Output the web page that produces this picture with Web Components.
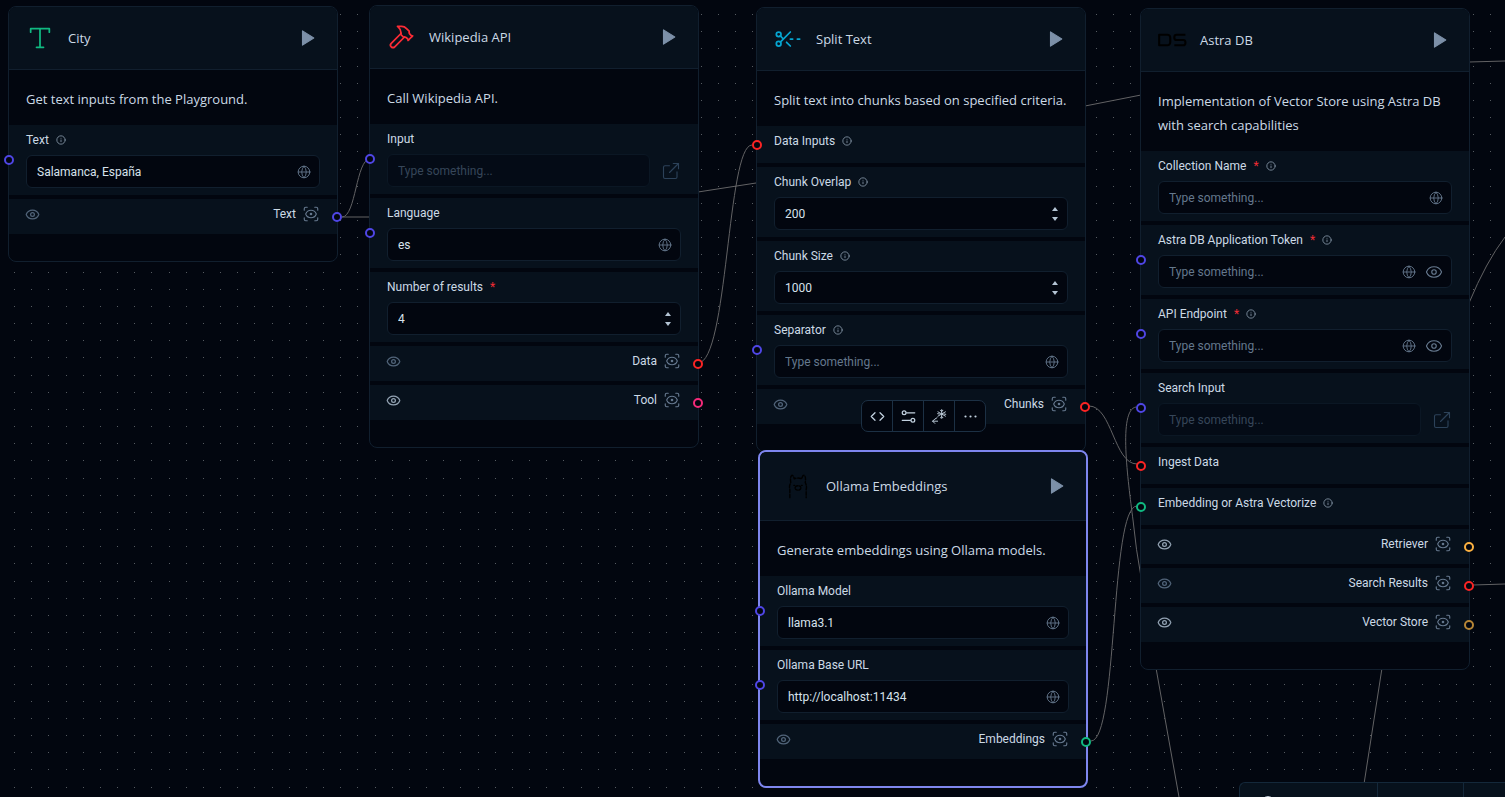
<!DOCTYPE html>
<html lang="en">
<head>
<meta charset="utf-8">
<title>Flow editor</title>
<style>
  html, body { margin: 0; height: 100%; background: #02060f; }
  body {
    font-family: "Open Sans", "Noto Sans", sans-serif;
    color: #ccdae6;
    --card: #07111c;
    --ground: #02060f;
    --line: #111f2e;
    --muted: #677a90;
    --label-font: Roboto, "Liberation Sans", sans-serif;
    --indigo: #4f46e5;
    --red: #fb2424;
    --green: #10b981;
    --pink: #f42a79;
    --amber: #fbb040;
    --ochre: #b78636;
  }
</style>
</head>
<body>
<flow-canvas>
  <flow-node name="City" icon="type" tint="#10b981" text="Get text inputs from the Playground." style="left:8px;top:6px">
    <node-field label="Text" info value="Salamanca, España" kind="global" port="--indigo"></node-field>
    <node-output label="Text" port="--indigo"></node-output>
  </flow-node>

  <flow-node name="Wikipedia API" icon="hammer" tint="#fb2c36" text="Call Wikipedia API." style="left:369px;top:5px">
    <node-field label="Input" kind="linked" port="--indigo"></node-field>
    <node-field label="Language" value="es" kind="global" port="--indigo"></node-field>
    <node-field label="Number of results" required value="4" kind="number"></node-field>
    <node-output label="Data" port="--red"></node-output>
    <node-output label="Tool" port="--pink" bright></node-output>
  </flow-node>

  <flow-node name="Split Text" icon="scissors" tint="#06a5d0" text="Split text into chunks based on specified criteria." style="left:756px;top:7px">
    <node-field label="Data Inputs" info kind="port" port="--red"></node-field>
    <node-field label="Chunk Overlap" info value="200" kind="number"></node-field>
    <node-field label="Chunk Size" info value="1000" kind="number"></node-field>
    <node-field label="Separator" info kind="global" port="--indigo"></node-field>
    <node-output label="Chunks" port="--red"></node-output>
  </flow-node>

  <flow-node name="Ollama Embeddings" icon="llama" tint="#000" text="Generate embeddings using Ollama models." selected style="left:758px;top:450px">
    <node-field label="Ollama Model" value="llama3.1" kind="global" port="--indigo"></node-field>
    <node-field label="Ollama Base URL" value="http://localhost:11434" kind="global" port="--indigo"></node-field>
    <node-output label="Embeddings" port="--green"></node-output>
  </flow-node>

  <flow-node name="Astra DB" icon="datastax" tint="#000" text="Implementation of Vector Store using Astra DB with search capabilities" style="left:1140px;top:8px">
    <node-field label="Collection Name" required info kind="global"></node-field>
    <node-field label="Astra DB Application Token" required info kind="secret" port="--indigo"></node-field>
    <node-field label="API Endpoint" required info kind="secret" port="--indigo"></node-field>
    <node-field label="Search Input" kind="linked" port="--indigo"></node-field>
    <node-field label="Ingest Data" kind="port" port="--red"></node-field>
    <node-field label="Embedding or Astra Vectorize" info kind="port" port="--green"></node-field>
    <node-output label="Retriever" port="--amber" bright></node-output>
    <node-output label="Search Results" port="--red"></node-output>
    <node-output label="Vector Store" port="--ochre" bright></node-output>
  </flow-node>

  <node-toolbar style="left:861px;top:400px"></node-toolbar>
  <flow-dock style="left:1239px;top:782px"></flow-dock>
</flow-canvas>

<script>
const ICONS = {
  type: '<path d="M4 7V4h16v3M9 20h6M12 4v16"/>',
  hammer: '<path d="m15 12-8.373 8.373a1 1 0 1 1-3-3L12 9"/><path d="m18 15 4-4"/><path d="m21.5 11.5-1.914-1.914A2 2 0 0 1 19 8.172V7l-2.26-2.26a6 6 0 0 0-4.202-1.756L9 2.96l.92.82A6.18 6.18 0 0 1 12 8.4V10l2 2h1.172a2 2 0 0 1 1.414.586L18.5 14.5"/>',
  scissors: '<circle cx="4" cy="8" r="2"/><circle cx="4" cy="16" r="2"/><path d="M5.42 9.42 8 12M14 6l-8.58 8.58M10.8 14.8 14 18M16 12h-2M22 12h-2"/>',
  llama: '<g stroke-width="1.2"><path d="M5 22v-7c-.6-2-.2-4 .8-6C5.300 6 5.500 3.500 6.800 2.800c1.200 0 1.700 1.600 1.900 3 2-.8 4.600-.8 6.600 0 .2-1.400.7-3 1.900-3C18.500 3.500 18.700 6 18.200 9c1 2 1.400 4 .8 6v7" stroke-dasharray="3 1.400"/><path d="M8.500 11.500h.6M15 11.500h.6M10 12.500c1-1 3-1 4 0s.5 3-2 3-3-2-2-3" stroke-dasharray="2 1"/></g>',
  datastax: '<path d="M1 7.500h7a2.500 2.500 0 0 1 2.500 2.500v4A2.500 2.500 0 0 1 8 16.500H1zM23.500 7.500H16a2 2 0 0 0-2 2v.500a2 2 0 0 0 2 2h5.500a2 2 0 0 1 2 2v.500a2 2 0 0 1-2 2H14" stroke-width="1.800" stroke-linecap="butt"/>',
  play: '<path d="M6 2.500 21 12 6 21.500z" fill="currentColor"/>',
  globe: '<circle cx="12" cy="12" r="10"/><path d="M12 2a14.500 14.500 0 0 0 0 20 14.500 14.500 0 0 0 0-20M2 12h20"/>',
  info: '<circle cx="12" cy="12" r="10"/><path d="M12 16v-4M12 8h.01"/>',
  eye: '<path d="M2.062 12.348a1 1 0 0 1 0-.696 10.750 10.750 0 0 1 19.876 0 1 1 0 0 1 0 .696 10.750 10.750 0 0 1-19.876 0"/><circle cx="12" cy="12" r="3"/>',
  scan: '<path d="M3 7V5a2 2 0 0 1 2-2h2M17 3h2a2 2 0 0 1 2 2v2M21 17v2a2 2 0 0 1-2 2h-2M7 21H5a2 2 0 0 1-2-2v-2"/><circle cx="12" cy="12" r="1"/><path d="M18.944 12.330a1 1 0 0 0 0-.660 7.500 7.500 0 0 0-13.888 0 1 1 0 0 0 0 .660 7.500 7.500 0 0 0 13.888 0"/>',
  external: '<path d="M15 2h7v7M10 14 22 2M20 13v7a2 2 0 0 1-2 2H4a2 2 0 0 1-2-2V7a2 2 0 0 1 2-2h6"/>',
  up: '<path d="M12 6 21 18H3z" fill="currentColor" stroke="none"/>',
  down: '<path d="M3 6h18l-9 12z" fill="currentColor" stroke="none"/>',
  code: '<path d="m16 18 6-6-6-6M8 6l-6 6 6 6"/>',
  sliders: '<path d="M22 6H9M15 18H2"/><circle cx="19" cy="18" r="3"/><circle cx="5" cy="6" r="3"/>',
  freeze: '<g stroke-width="1.500"><path d="M15.500 1v14M9.500 4.500l12 7M21.500 4.500l-12 7M13.500 2l2 2 2-2M13.500 14l2-2 2 2M9 7.500l3 .5M22 8.500l-3-.5"/><path d="M9 19.500H1M4.500 16 1 19.500 4.500 23M8 14l-3 2"/></g>',
  dots: '<path d="M4 12h.01M12 12h.01M20 12h.01" stroke-width="3.500"/>',
  disc: '<circle cx="12" cy="12" r="11" fill="currentColor"/>'
};

const define = (tag, css, render) => customElements.define(tag, class extends HTMLElement {
  connectedCallback() {
    if (this.shadowRoot) return;
    const root = this.attachShadow({ mode: 'open' });
    const t = document.createElement('template');
    t.innerHTML = `<style>*{box-sizing:border-box}button{all:unset;display:flex;align-items:center;justify-content:center;box-sizing:border-box;cursor:pointer}${css}</style>${render(this)}`;
    root.append(t.content.cloneNode(true));
  }
});
const at = (el, name) => el.getAttribute(name) || '';

define('ui-icon', `
  :host { display: block; flex: none; width: var(--size, 14px); height: var(--size, 14px); }
  svg { display: block; width: 100%; height: 100%; overflow: visible; }`,
  el => `<svg viewBox="0 0 24 24" fill="none" stroke="currentColor" stroke-width="${at(el, 'weight') || '1.5'}" stroke-linecap="round" stroke-linejoin="round" aria-hidden="true">${ICONS[at(el, 'name')]}</svg>`);

// Connection point, centred on the edge of the row that holds it.
define('flow-port', `
  :host { display: block; position: absolute; z-index: 2; top: 50%; left: -5px; margin-top: -5px;
    width: 10px; height: 10px; box-sizing: border-box; border: 2px solid; border-radius: 50%; background: var(--ground); }
  :host([side=right]) { left: auto; right: -5px; }`, () => '');

define('node-field', `
  :host { display: block; position: relative; height: 70px; padding: 5px 17px 7px; box-sizing: border-box;
    background: var(--card); font-family: var(--label-font); font-size: 12px; }
  :host([kind=port]) { height: 37px; }
  .head { display: flex; align-items: center; height: 20px; gap: 7px; line-height: 20px; }
  .head ui-icon { --size: 10px; color: #8797a8; }
  .req { color: #f02c34; }
  .line { display: flex; align-items: center; gap: 12px; margin-top: 5px; }
  .line > ui-icon { --size: 18px; margin-right: 1px; color: #2c4259; }
  .box { flex: 1; display: flex; align-items: center; height: 33px; padding: 0 8px 0 10px; gap: 9px; min-width: 0;
    border: 1px solid var(--line); border-radius: 6px; background: var(--ground); color: var(--muted); }
  input { all: unset; flex: 1; min-width: 0; color: #d7e2ec; appearance: textfield; }
  input::-webkit-inner-spin-button { display: none; }
  input::placeholder { color: #64788d; opacity: 1; }
  input:disabled::placeholder { color: #364659; }
  .off { background: #040b16; border-color: #0b1724; }
  .eye { --size: 18px; }
  .step { display: flex; flex-direction: column; color: #b4c4d4; }
  .step button { width: 8px; height: 10px; --size: 8px; }`,
  el => {
    const kind = at(el, 'kind'), port = at(el, 'port');
    const globe = '<button aria-label="Use global variable"><ui-icon name="globe"></ui-icon></button>';
    const tail = {
      global: globe,
      secret: globe + '<button class="eye" aria-label="Show value"><ui-icon name="eye"></ui-icon></button>',
      number: '<span class="step"><button aria-label="Increase"><ui-icon name="up"></ui-icon></button><button aria-label="Decrease"><ui-icon name="down"></ui-icon></button></span>'
    }[kind] || '';
    const off = kind === 'linked';
    const control = kind === 'port' ? '' : `<div class="line"><div class="box ${off ? 'off' : ''}">
      <input id="value" type="${kind === 'number' ? 'number' : 'text'}" placeholder="Type something..." value="${at(el, 'value')}" ${off ? 'disabled' : ''}>${tail}</div>
      ${off ? '<ui-icon name="external"></ui-icon>' : ''}</div>`;
    const name = kind === 'port' ? `<span>${at(el, 'label')}</span>` : `<label for="value">${at(el, 'label')}</label>`;
    return `<div class="head">${name}
      ${el.hasAttribute('required') ? '<span class="req">*</span>' : ''}
      ${el.hasAttribute('info') ? '<ui-icon name="info" weight="2"></ui-icon>' : ''}</div>${control}
      ${port ? `<flow-port style="border-color:var(${port})"></flow-port>` : ''}`;
  });

define('node-output', `
  :host { display: flex; align-items: center; position: relative; height: 35px; padding: 0 17px 5px 16px; box-sizing: border-box;
    background: var(--card); font-family: var(--label-font); font-size: 12px; line-height: 20px; }
  .see { --size: 15px; color: #52657a; margin-right: auto; }
  :host([bright]) .see { color: #94a4b4; }
  .scan { --size: 18px; color: var(--muted); margin-left: 6px; }`,
  el => `<button class="see" aria-label="Toggle output"><ui-icon name="eye" weight="2"></ui-icon></button>
    <span>${at(el, 'label')}</span>
    <button class="scan" aria-label="Inspect output"><ui-icon name="scan"></ui-icon></button>
    <flow-port side="right" style="border-color:var(${at(el, 'port')})"></flow-port>`);

define('flow-node', `
  :host { display: block; position: absolute; width: 330px; box-sizing: border-box; padding-bottom: 27px;
    border: 1px solid var(--line); border-radius: 8px; background: var(--ground); font-size: 13px; }
  :host([selected]) { border: 2px solid #7e86ee; }
  header { display: flex; align-items: center; gap: 14px; height: 63px; padding: 0 21px 0 17px;
    border-bottom: 1px solid var(--line); border-radius: 7px 7px 0 0; background: var(--card); }
  .mark { display: flex; justify-content: center; width: 28px; --size: 28px; }
  :host([selected]) header { height: 69px; gap: 7px; }
  :host([selected]) .mark { width: 42px; }
  h2 { flex: 1; margin: 0; font-size: 13px; font-weight: 400; line-height: 20px; }
  header button { --size: 18px; color: #7c90a8; }
  p { margin: 0; padding: 17px 17px 14px; line-height: 24px; }
  .rows { display: flex; flex-direction: column; gap: 4px; }`,
  el => `<header><span class="mark" style="color:${at(el, 'tint')}"><ui-icon name="${at(el, 'icon')}"></ui-icon></span>
    <h2>${at(el, 'name')}</h2><button aria-label="Run ${at(el, 'name')}"><ui-icon name="play"></ui-icon></button></header>
    <p>${at(el, 'text')}</p><div class="rows"><slot></slot></div>`);

define('node-toolbar', `
  :host { display: flex; position: absolute; z-index: 3; border: 1px solid #1c3044; border-radius: 7px; background: var(--ground); color: #c3d2e0; }
  button { width: 31px; height: 30px; --size: 15px; }
  button:first-of-type { width: 30px; }
  button + button { border-left: 1px solid #1c3044; }`,
  () => [['code', 'Code'], ['sliders', 'Controls'], ['freeze', 'Freeze path'], ['dots', 'More']]
    .map(([i, l]) => `<button aria-label="${l}"><ui-icon name="${i}" weight="2"></ui-icon></button>`).join(''));

define('flow-dock', `
  :host { display: flex; position: absolute; right: 0; height: 44px; box-sizing: border-box; border: 1px solid #14283a;
    border-right: 0; border-radius: 6px 0 0 0; background: var(--card); color: #dbe6f0; }
  button { width: 86px; border-right: 1px solid #14283a; --size: 16px; }
  button:first-of-type { width: 138px; justify-content: flex-start; padding-left: 20px; }`,
  () => `<button aria-label="Playground"><ui-icon name="disc"></ui-icon></button><button aria-label="API"></button>`);

// Dots: six per 103px tile keeps every dot on a whole pixel.
const steps = [0, 17, 34, 52, 69, 86];
const dots = steps.flatMap(y => steps.map(x => `<path d="M${x} ${y}h1v1h-1z"/>`)).join('');
const wires = [
  'M342 217C356 217 356 159 370 159', 'M342 217H369', 'M698 192 756 183', 'M1085 106 1141 95', 'M1469 62 1505 61',
  'M698 363C728 363 727 145 752 145', 'M1089 406C1112 406 1114 464 1137 464', 'M1091 741C1118 741 1110 506 1137 506',
  'M1136 407C1118 410 1128 480 1133 520Q1136 550 1141 577', 'M1156 668 1179 797', 'M1382 668 1364 784',
  'M1469 303Q1486 262 1505 237', 'M1473 585 1505 584'
];
define('flow-canvas', `
  :host { display: block; position: relative; width: 100%; height: 100vh; min-height: 400px; overflow: hidden; background: var(--ground); }
  svg { position: absolute; inset: 0; width: 100%; height: 100%; }`,
  () => `<svg aria-hidden="true"><defs><pattern id="grid" x="14" y="14" width="103" height="103" patternUnits="userSpaceOnUse" fill="#565b61">${dots}</pattern></defs>
    <rect width="100%" height="100%" fill="url(#grid)"/><g fill="none" stroke="#626264">${wires.map(d => `<path d="${d}"/>`).join('')}</g></svg>
    <slot></slot>`);
</script>
</body>
</html>
